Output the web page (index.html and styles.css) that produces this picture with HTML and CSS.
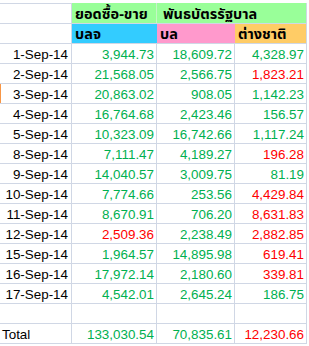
FILE: index.html
```html
<!DOCTYPE html>
<html lang="th">
<head>
<meta charset="utf-8">
<title>ยอดซื้อ-ขาย พันธบัตรรัฐบาล</title>
<link rel="stylesheet" href="styles.css">
</head>
<body>
<div class="sheet">
  <div class="c"></div>
  <div class="c th hd-green hd-first">ยอดซื้อ-ขาย</div>
  <div class="c th hd-green hd-span">พันธบัตรรัฐบาล</div>

  <div class="c"></div>
  <div class="c th hd-blue">บลจ</div>
  <div class="c th hd-pink">บล</div>
  <div class="c th hd-orange">ต่างชาติ</div>

  <div class="c d">1-Sep-14</div><div class="c n g">3,944.73</div><div class="c n g">18,609.72</div><div class="c n g">4,328.97</div>
  <div class="c d">2-Sep-14</div><div class="c n g">21,568.05</div><div class="c n g">2,566.75</div><div class="c n r">1,823.21</div>
  <div class="c d mark">3-Sep-14</div><div class="c n g">20,863.02</div><div class="c n g">908.05</div><div class="c n g">1,142.23</div>
  <div class="c d">4-Sep-14</div><div class="c n g">16,764.68</div><div class="c n g">2,423.46</div><div class="c n g">156.57</div>
  <div class="c d">5-Sep-14</div><div class="c n g">10,323.09</div><div class="c n g">16,742.66</div><div class="c n g">1,117.24</div>
  <div class="c d">8-Sep-14</div><div class="c n g">7,111.47</div><div class="c n g">4,189.27</div><div class="c n r">196.28</div>
  <div class="c d">9-Sep-14</div><div class="c n g">14,040.57</div><div class="c n g">3,009.75</div><div class="c n g">81.19</div>
  <div class="c d">10-Sep-14</div><div class="c n g">7,774.66</div><div class="c n g">253.56</div><div class="c n r">4,429.84</div>
  <div class="c d">11-Sep-14</div><div class="c n g">8,670.91</div><div class="c n g">706.20</div><div class="c n r">8,631.83</div>
  <div class="c d">12-Sep-14</div><div class="c n r">2,509.36</div><div class="c n g">2,238.49</div><div class="c n r">2,882.85</div>
  <div class="c d">15-Sep-14</div><div class="c n g">1,964.57</div><div class="c n g">14,895.98</div><div class="c n r">619.41</div>
  <div class="c d">16-Sep-14</div><div class="c n g">17,972.14</div><div class="c n g">2,180.60</div><div class="c n r">339.81</div>
  <div class="c d">17-Sep-14</div><div class="c n g">4,542.01</div><div class="c n g">2,645.24</div><div class="c n g">186.75</div>

  <div class="c"></div><div class="c"></div><div class="c"></div><div class="c"></div>

  <div class="c total">Total</div><div class="c n g">133,030.54</div><div class="c n g">70,835.61</div><div class="c n r">12,230.66</div>
</div>
</body>
</html>
```

FILE: styles.css
```css
html, body {
  margin: 0;
  padding: 0;
  background: #ffffff;
}

body {
  font-family: "Liberation Sans", Arial, sans-serif;
  font-size: 13.4px;
  color: #000000;
}

.sheet {
  display: grid;
  grid-template-columns: 71px 84px 77px 71px;
  grid-auto-rows: 19px;
  gap: 1px;
  background: #d0d7e5;
  padding: 1px 1px 1px 0;
  margin-top: 3px;
  width: max-content;
}

.c {
  background: #ffffff;
  line-height: 16px;
  padding-top: 3px;
  white-space: nowrap;
  overflow: visible;
}

.th {
  font-family: Tahoma, "Noto Sans Thai", "Noto Sans Thai UI", Loma, Garuda, "Tlwg Typo", Waree, "Noto Sans", sans-serif;
  font-size: 14.5px;
  font-weight: bold;
  padding-left: 3px;
  line-height: 16px;
}

.hd-green {
  background: #99ff99;
  box-shadow: 0 -1px 0 #99ff99;
}

.hd-first {
  box-shadow: 0 -1px 0 #99ff99, 1px 0 0 #c4f7c4;
}

.hd-span {
  grid-column: span 2;
  padding-left: 6px;
}

.hd-blue {
  background: #33ccff;
  box-shadow: 1px 0 0 #33ccff;
}

.hd-pink {
  background: #ff99cc;
  box-shadow: 1px 0 0 #ff99cc;
}

.hd-orange {
  background: #ffcc66;
}

.d {
  text-align: right;
  padding-right: 3px;
}

.mark {
  box-shadow: inset 1px 0 0 #f79646;
}

.n {
  text-align: right;
  padding-right: 2px;
}

.g {
  color: #00b050;
}

.r {
  color: #ff0000;
}

.total {
  padding-left: 2px;
}
```
